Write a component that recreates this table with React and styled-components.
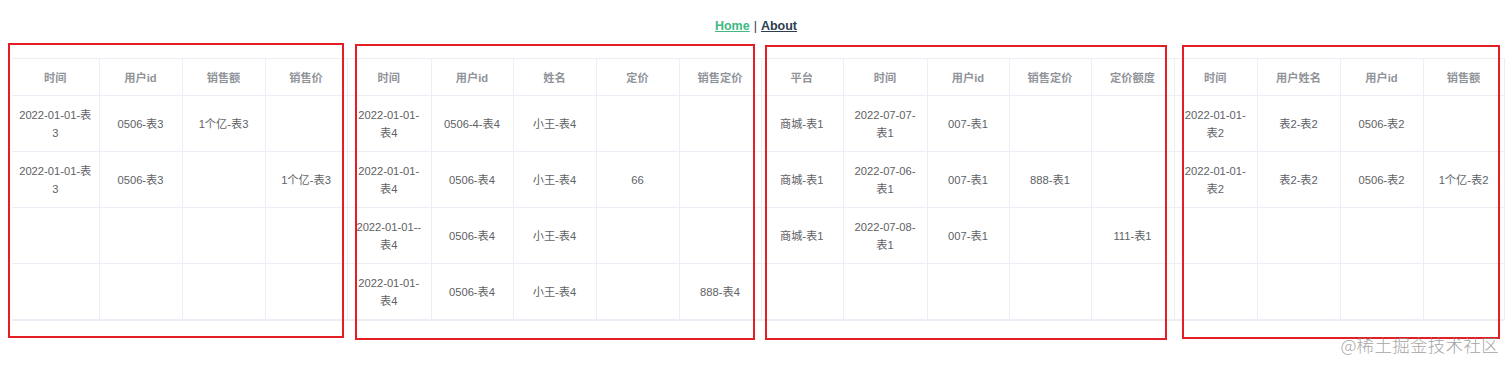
import React from "react";
import styled, { createGlobalStyle } from "styled-components";

const GlobalStyle = createGlobalStyle`
  html, body { margin: 0; padding: 0; background: #ffffff; }
  body {
    font-family: "Liberation Sans", Arial, "Noto Sans CJK SC", sans-serif;
    -webkit-font-smoothing: antialiased;
  }
`;

const Page = styled.div`
  position: relative;
  width: 1512px;
  height: 367px;
  overflow: hidden;
  color: #2c3e50;
`;

const Nav = styled.nav`
  display: flex;
  justify-content: center;
  align-items: center;
  gap: 4px;
  height: 20px;
  padding-top: 16px;
  font-size: 12.5px;
  color: #2c3e50;
`;

const NavLink = styled.a`
  font-weight: bold;
  color: ${(p) => (p.$active ? "#42b983" : "#2c3e50")};
  text-decoration: underline;
  cursor: pointer;
`;

const Sep = styled.span`
  color: #2c3e50;
  font-weight: normal;
`;

const Tables = styled.div`
  display: flex;
  margin: 22px 0 0 12px;
  width: 1492px;
`;

const TableWrap = styled.div`
  width: ${(p) => p.$w}px;
  flex: none;
  border-bottom: 1px solid #ebeef5;
`;

const Table = styled.table`
  width: 100%;
  table-layout: fixed;
  border-collapse: collapse;
  font-size: 11.2px;
`;

const Th = styled.th`
  height: 36px;
  padding: 0 6px;
  border-top: 1px solid #ebeef5;
  border-bottom: 1px solid #ebeef5;
  border-right: 1px solid #ebeef5;
  color: #909399;
  font-weight: bold;
  text-align: center;
  vertical-align: middle;
`;

const Td = styled.td`
  height: 55px;
  padding: 0 4px;
  border-bottom: 1px solid #ebeef5;
  border-right: 1px solid #ebeef5;
  color: #606266;
  line-height: 18px;
  text-align: center;
  vertical-align: middle;
  white-space: pre-line;
  word-break: keep-all;
`;

const Annotation = styled.div`
  position: absolute;
  left: ${(p) => p.$x}px;
  top: ${(p) => p.$y}px;
  width: ${(p) => p.$w}px;
  height: ${(p) => p.$h}px;
  box-sizing: border-box;
  border: 2px solid #e31e24;
  pointer-events: none;
`;

const Watermark = styled.div`
  position: absolute;
  right: 13px;
  top: 332px;
  font-size: 17.5px;
  letter-spacing: 0.3px;
  color: rgba(140, 140, 140, 0.8);
  font-family: "Noto Sans CJK SC", "Liberation Sans", sans-serif;
  font-weight: 300;
  white-space: nowrap;
`;

const tables = [
  {
    w: 335,
    cols: [87, 83, 83, 82],
    head: ["时间", "用户id", "销售额", "销售价"],
    rows: [
      ["2022-01-01-表\n3", "0506-表3", "1个亿-表3", ""],
      ["2022-01-01-表\n3", "0506-表3", "", "1个亿-表3"],
      ["", "", "", ""],
      ["", "", "", ""],
    ],
  },
  {
    w: 414,
    cols: [84, 82, 83, 83, 82],
    head: ["时间", "用户id", "姓名", "定价", "销售定价"],
    rows: [
      ["2022-01-01-\n表4", "0506-4-表4", "小王-表4", "", ""],
      ["2022-01-01-\n表4", "0506-表4", "小王-表4", "66", ""],
      ["2022-01-01--\n表4", "0506-表4", "小王-表4", "", ""],
      ["2022-01-01-\n表4", "0506-表4", "小王-表4", "", "888-表4"],
    ],
  },
  {
    w: 413,
    cols: [82, 84, 82, 82, 83],
    head: ["平台", "时间", "用户id", "销售定价", "定价额度"],
    rows: [
      ["商城-表1", "2022-07-07-\n表1", "007-表1", "", ""],
      ["商城-表1", "2022-07-06-\n表1", "007-表1", "888-表1", ""],
      ["商城-表1", "2022-07-08-\n表1", "007-表1", "", "111-表1"],
      ["", "", "", "", ""],
    ],
  },
  {
    w: 330,
    cols: [83, 83, 83, 81],
    head: ["时间", "用户姓名", "用户id", "销售额"],
    rows: [
      ["2022-01-01-\n表2", "表2-表2", "0506-表2", ""],
      ["2022-01-01-\n表2", "表2-表2", "0506-表2", "1个亿-表2"],
      ["", "", "", ""],
      ["", "", "", ""],
    ],
  },
];

const annotations = [
  { x: 8, y: 43, w: 336, h: 295 },
  { x: 355, y: 44, w: 400, h: 296 },
  { x: 765, y: 45, w: 402, h: 295 },
  { x: 1182, y: 45, w: 318, h: 294 },
];

const Col = styled.col`
  width: ${(p) => p.$w}px;
`;

function DataTable({ t }) {
  return (
    <TableWrap $w={t.w}>
      <Table>
        <colgroup>
          {t.cols.map((w, i) => (
            <Col key={i} $w={w} />
          ))}
        </colgroup>
        <thead>
          <tr>
            {t.head.map((h, i) => (
              <Th key={i}>{h}</Th>
            ))}
          </tr>
        </thead>
        <tbody>
          {t.rows.map((r, ri) => (
            <tr key={ri}>
              {r.map((c, ci) => (
                <Td key={ci}>{c}</Td>
              ))}
            </tr>
          ))}
        </tbody>
      </Table>
    </TableWrap>
  );
}

export default function App() {
  return (
    <Page>
      <GlobalStyle />
      <Nav>
        <NavLink $active>Home</NavLink>
        <Sep>|</Sep>
        <NavLink>About</NavLink>
      </Nav>
      <Tables>
        {tables.map((t, i) => (
          <DataTable key={i} t={t} />
        ))}
      </Tables>
      {annotations.map((a, i) => (
        <Annotation key={i} $x={a.x} $y={a.y} $w={a.w} $h={a.h} />
      ))}
      <Watermark>@稀土掘金技术社区</Watermark>
    </Page>
  );
}
